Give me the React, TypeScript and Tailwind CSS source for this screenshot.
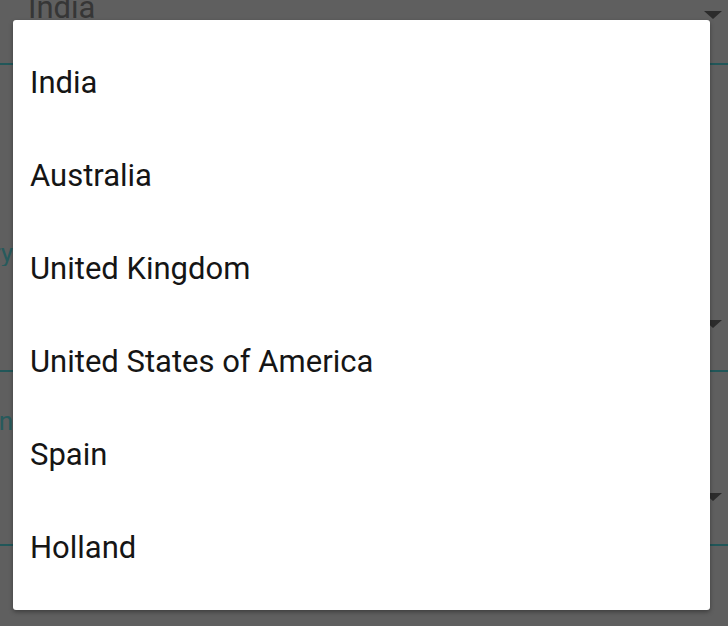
const countries = [
  'India',
  'Australia',
  'United Kingdom',
  'United States of America',
  'Spain',
  'Holland',
]

function Arrow() {
  return (
    <svg width="18" height="8" viewBox="0 0 18 8" className="shrink-0">
      <path d="M0 0 L18 0 L9 8 Z" fill="#2c2c2c" />
    </svg>
  )
}

function Label({ text }: { text: string }) {
  return (
    <div className="flex w-[13px] justify-end overflow-hidden">
      <span className="whitespace-nowrap text-[26px] leading-none text-[#275a5c]">{text}</span>
    </div>
  )
}

export default function App() {
  return (
    <div className="relative h-[626px] w-[728px] overflow-hidden bg-[#5f5f5f] font-['Roboto',sans-serif]">
      {/* form behind the scrim */}
      <div className="flex flex-col">
        <div className="flex h-[63px] items-start justify-between pl-[28px] pr-[6px]">
          <span className="-mt-[12px] text-[31px] leading-[40px] text-[#363636]">India</span>
          <div className="mt-[11px]">
            <Arrow />
          </div>
        </div>
        <div className="h-[2px] bg-[#215759]" />
        <div className="mt-[175px]">
          <Label text="Country" />
        </div>
        <div className="mt-[54px] flex justify-end pr-[6px]">
          <Arrow />
        </div>
        <div className="mt-[42px] h-[2px] bg-[#215759]" />
        <div className="mt-[36px]">
          <Label text="Region" />
        </div>
        <div className="mt-[59px] flex justify-end pr-[6px]">
          <Arrow />
        </div>
        <div className="mt-[43px] h-[2px] bg-[#215759]" />
      </div>

      {/* dropdown popup */}
      <div className="absolute left-[13px] top-[20px] w-[697px] rounded-[3px] bg-white py-4 shadow-[0_2px_4px_rgba(0,0,0,0.35)]">
        {countries.map((c) => (
          <div key={c} className="flex h-[93px] items-center px-[17px] pt-[2px] text-[31px] text-[#151515]">
            {c}
          </div>
        ))}
      </div>
    </div>
  )
}
